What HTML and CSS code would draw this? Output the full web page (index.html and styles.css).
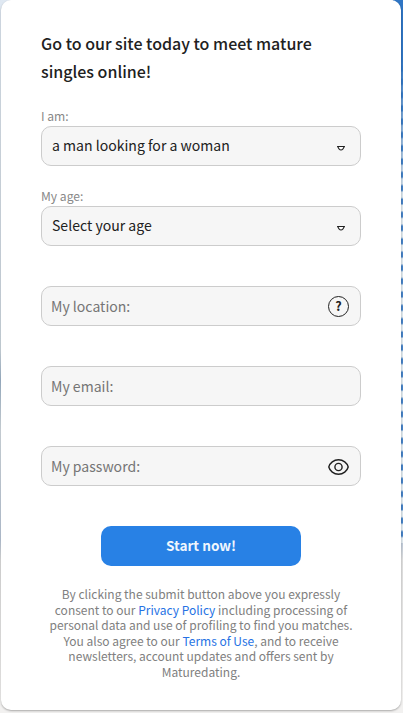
FILE: index.html
```html
<!DOCTYPE html>
<html lang="en">
<head>
<meta charset="utf-8">
<title>Maturedating</title>
<link rel="stylesheet" href="styles.css">
</head>
<body>
<form class="card">
  <h1 class="title">Go to our site today to meet mature<br>singles online!</h1>
  <div class="group">
    <span class="label">I am:</span>
    <div class="field field-select"><span>a man looking for a woman</span>
      <svg class="arrow" viewBox="0 0 8 6"><path d="M.6 1.5H7.4L6 3.9Q4 6 2 3.9Z"/></svg></div>
  </div>
  <div class="group">
    <span class="label">My age:</span>
    <div class="field field-select"><span>Select your age</span>
      <svg class="arrow" viewBox="0 0 8 6"><path d="M.6 1.5H7.4L6 3.9Q4 6 2 3.9Z"/></svg></div>
  </div>
  <div class="group">
    <div class="field field-input"><span>My location:</span><span class="help">?</span></div>
  </div>
  <div class="group">
    <div class="field field-input"><span>My email:</span></div>
  </div>
  <div class="group">
    <div class="field field-input"><span>My password:</span>
      <svg class="eye" viewBox="0 0 21 16"><path d="M.8 8C1.8 4 5.8 .8 10.5 .8S19.2 4 20.2 8C19.2 12 15.2 15.2 10.5 15.2S1.8 12 .8 8Z"/><circle cx="10.5" cy="8" r="3.6"/></svg></div>
  </div>
  <button class="submit" type="button">Start now!</button>
  <p class="legal">By clicking the submit button above you expressly<br>consent to our <a href="#">Privacy Policy</a> including processing of<br>personal data and use of profiling to find you matches.<br>You also agree to our <a href="#">Terms of Use</a>, and to receive<br>newsletters, account updates and offers sent by<br>Maturedating.</p>
</form>
</body>
</html>
```
FILE: styles.css
```css
* { box-sizing: border-box; }
html { height: 713px; overflow: hidden; }
body {
  margin: 0;
  padding: 0 2px 0 1px;
  height: 713px;
  overflow: hidden;
  font-family: "Noto Sans CJK SC", "Noto Sans", sans-serif;
  background:
    linear-gradient(#2f75c4 0 60px, transparent 200px) 401px 0 / 2px 200px no-repeat,
    repeating-linear-gradient(#4682c6 0 4px, #dfe8ed 6px 11px, #4682c6 13.3px) 401px 0 / 2px 543px no-repeat,
    linear-gradient(#2f75c4, #2f75c4) 393px 0 / 10px 10px no-repeat,
    linear-gradient(#dfe8f2, #ced8e0 350px, #9fb5ca 380px, #d4dce2 430px, #b9c6d7 540px, #dedede 560px, #f2f1f0 700px);
}
.card {
  display: flex;
  flex-direction: column;
  height: 710px;
  padding: 29px 40px 0;
  background: #fff;
  border-radius: 10px;
  box-shadow: 0 1px 2px rgba(0, 0, 0, .3);
}
.title {
  margin: 0 0 21px;
  height: 56px;
  font-size: 16px;
  line-height: 28px;
  font-weight: 500;
  color: #212121;
  white-space: nowrap;
}
.group {
  display: flex;
  flex-direction: column;
  justify-content: flex-end;
  height: 80px;
}
.title + .group { height: 60px; }
.label {
  font-size: 12.1px;
  line-height: 20px;
  color: #888;
}
.field {
  display: flex;
  align-items: center;
  justify-content: space-between;
  height: 40px;
  border: 1px solid #ccc;
  border-radius: 10px;
  background: #f6f6f6;
  padding: 0 11px 0 10px;
  font-size: 14.05px;
  line-height: 20px;
}
.field-select { color: #212121; padding-right: 15px; }
.field-select span { margin-top: -2px; }
.field-input { color: #757575; padding-left: 9px; }
.arrow { width: 8px; height: 6px; margin-top: 4px; }
.arrow path { fill: #fff; stroke: #212121; stroke-width: 1.1; }
.help {
  width: 21px;
  height: 21px;
  margin-top: 1px;
  border: 1.5px solid #212121;
  border-radius: 50%;
  color: #212121;
  font-size: 12.5px;
  font-weight: 700;
  line-height: 18px;
  text-align: center;
}
.eye { width: 21px; height: 16px; margin-top: 2px; }
.eye path, .eye circle { fill: none; stroke: #212121; stroke-width: 1.4; }
.submit {
  align-self: center;
  flex: none;
  width: 200px;
  height: 40px;
  margin-top: 40px;
  padding: 0 0 1px;
  border: 0;
  border-radius: 10px;
  background: #2881e5;
  color: #f0f6fd;
  font: 700 13.6px/39px "Noto Sans CJK SC", sans-serif;
}
.legal {
  margin: 20px -10px 0;
  font-size: 12px;
  line-height: 15.6px;
  text-align: center;
  white-space: nowrap;
  color: #808080;
}
.legal a { color: #2672e4; text-decoration: none; }
```
